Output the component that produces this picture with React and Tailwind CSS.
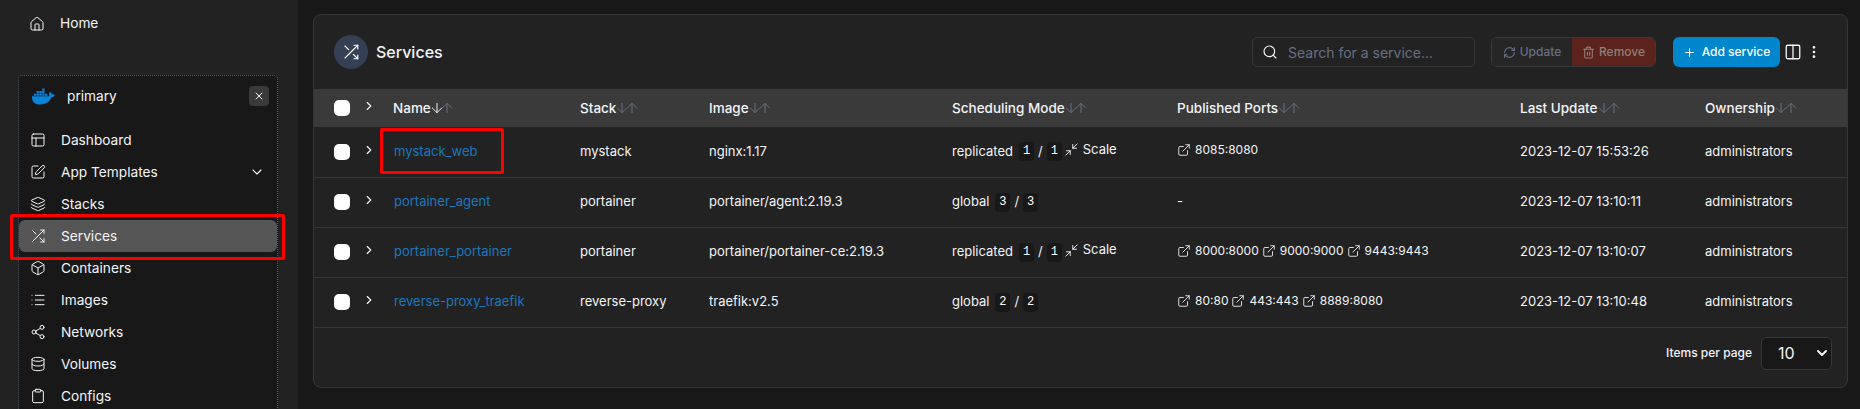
import React from "react";
import {
  House,
  Layout,
  SquarePen,
  Layers,
  Box,
  List,
  Share2,
  Database,
  Clipboard,
  ChevronDown,
  ChevronRight,
  X,
  Search,
  RefreshCw,
  Trash2,
  Plus,
  Columns2,
  EllipsisVertical,
  ExternalLink,
  Minimize2,
  ArrowDown,
  ArrowUp,
} from "lucide-react";
import { FaDocker } from "react-icons/fa";
import { FiShuffle } from "react-icons/fi";

const menu = [
  { label: "Dashboard", icon: Layout },
  { label: "App Templates", icon: SquarePen, more: true },
  { label: "Stacks", icon: Layers },
  { label: "Services", icon: FiShuffle, active: true },
  { label: "Containers", icon: Box },
  { label: "Images", icon: List },
  { label: "Networks", icon: Share2 },
  { label: "Volumes", icon: Database },
  { label: "Configs", icon: Clipboard },
];

const columns = [
  { label: "Name", w: "w-[187px]", sorted: true },
  { label: "Stack", w: "w-[129px]" },
  { label: "Image", w: "w-[243px]" },
  { label: "Scheduling Mode", w: "w-[225px]" },
  { label: "Published Ports", w: "w-[343px]" },
  { label: "Last Update", w: "w-[185px]" },
  { label: "Ownership", w: "" },
];

const services = [
  {
    name: "mystack_web",
    stack: "mystack",
    image: "nginx:1.17",
    mode: "replicated",
    count: 1,
    scale: true,
    ports: ["8085:8080"],
    updated: "2023-12-07 15:53:26",
    marked: true,
  },
  {
    name: "portainer_agent",
    stack: "portainer",
    image: "portainer/agent:2.19.3",
    mode: "global",
    count: 3,
    ports: [],
    updated: "2023-12-07 13:10:11",
  },
  {
    name: "portainer_portainer",
    stack: "portainer",
    image: "portainer/portainer-ce:2.19.3",
    mode: "replicated",
    count: 1,
    scale: true,
    ports: ["8000:8000", "9000:9000", "9443:9443"],
    updated: "2023-12-07 13:10:07",
  },
  {
    name: "reverse-proxy_traefik",
    stack: "reverse-proxy",
    image: "traefik:v2.5",
    mode: "global",
    count: 2,
    ports: ["80:80", "443:443", "8889:8080"],
    updated: "2023-12-07 13:10:48",
  },
];

function Checkbox() {
  return <span className="block h-4 w-4 rounded-[5px] bg-white" />;
}

function Count({ value }) {
  return (
    <code className="mx-[1px] inline-block h-[19px] w-[15px] rounded-[4px] bg-[#181818] text-center font-['Liberation_Mono',monospace] text-[12px] leading-[19px] text-white">
      {value}
    </code>
  );
}

function Sidebar() {
  return (
    <aside className="w-[298px] shrink-0 bg-[#222222] pl-[18px] pr-[20px] text-[13.7px]">
      <div className="flex h-[47px] items-center pl-[11px] text-[#f2f4f7]">
        <House size={16} strokeWidth={1.5} className="mr-[15px]" />
        <span>Home</span>
      </div>
      <div className="mt-[28px] rounded-[4px] border border-dotted border-[#505568] bg-[#181818]">
        <div className="flex h-[40px] items-center pl-[13px] pr-[8px] text-[#f2f4f7]">
          <FaDocker size={23} className="text-[#0a84d6]" />
          <span className="ml-[12px]">primary</span>
          <span className="ml-auto flex h-5 w-5 items-center justify-center rounded-[4px] bg-[#3a3a3a]">
            <X size={12} strokeWidth={2} />
          </span>
        </div>
        <nav className="flex flex-col pt-[8px]">
          {menu.map(({ label, icon: Icon, more, active }) => (
            <div
              key={label}
              className={
                active
                  ? "relative flex h-8 items-center rounded-[6px] bg-[#555555] pl-[11px] pr-[12px] text-[#f2f4f7]"
                  : "relative flex h-8 items-center pl-[11px] pr-[12px] text-[#f2f4f7]"
              }
            >
              <Icon size={16} strokeWidth={1.5} className="mr-[15px]" />
              <span>{label}</span>
              {more && <ChevronDown size={16} strokeWidth={1.75} className="ml-auto" />}
              {active && (
                <span className="absolute -bottom-[8px] -left-[9px] -right-[8px] -top-[6px] rounded-[2px] border-[3px] border-[#ff0000]" />
              )}
            </div>
          ))}
        </nav>
      </div>
    </aside>
  );
}

function SortHeader({ label, sorted }) {
  return (
    <span className="flex items-center">
      {label}
      <ArrowDown
        size={16}
        strokeWidth={1.5}
        className={sorted ? "-ml-[2px] -mr-[6px] text-[#f2f4f7]" : "-ml-[2px] -mr-[6px] text-[#667085]"}
      />
      <ArrowUp size={16} strokeWidth={1.5} className="text-[#667085]" />
    </span>
  );
}

function ServiceRow({ row }) {
  return (
    <tr className="h-[50px] border-b border-[#373737] text-[#f2f4f7]">
      <td className="pl-[20px]">
        <Checkbox />
      </td>
      <td className="pl-[2px]">
        <ChevronRight size={14} strokeWidth={2} className="-mt-1" />
      </td>
      <td className="pl-[1px] text-[#1a78c0]">
        <span className="relative">
          {row.name}
          {row.marked && (
            <span className="absolute -bottom-[15px] -left-[14px] -right-[27px] -top-[15px] rounded-[2px] border-[3px] border-[#ff0000]" />
          )}
        </span>
      </td>
      <td>{row.stack}</td>
      <td>{row.image}</td>
      <td>
        <div className="flex items-center">
          <span className="mr-[5px]">{row.mode}</span>
          <Count value={row.count} />
          <span className="mx-[3px]">/</span>
          <Count value={row.count} />
          {row.scale && (
            <span className="-mt-[4px] ml-[1px] flex items-center">
              <Minimize2 size={15} strokeWidth={1.5} className="mr-[4px]" />
              Scale
            </span>
          )}
        </div>
      </td>
      <td>
        {row.ports.length === 0 ? (
          "-"
        ) : (
          <div className="-mt-[3px] flex items-center gap-[3px] text-[12px]">
            {row.ports.map((port) => (
              <span key={port} className="flex items-center gap-[4px]">
                <ExternalLink size={14} strokeWidth={1.5} />
                {port}
              </span>
            ))}
          </div>
        )}
      </td>
      <td>{row.updated}</td>
      <td>administrators</td>
    </tr>
  );
}

export default function App() {
  return (
    <div className="flex h-[409px] w-[1860px] overflow-hidden bg-[#181818] font-['Inter',sans-serif] text-[13px]">
      <Sidebar />
      <main className="flex-1 pl-[15px] pr-[12px] pt-[14px]">
        <section className="h-[374px] overflow-hidden rounded-[8px] border border-[#373737] bg-[#222222]">
          <div className="flex h-[74px] items-center pl-[20px] pr-[25px]">
            <span className="flex h-[34px] w-[34px] items-center justify-center rounded-full bg-[#344054] text-white">
              <FiShuffle size={18} strokeWidth={1.5} />
            </span>
            <h1 className="ml-[8px] text-[16px] font-medium text-[#f2f4f7]">Services</h1>
            <div className="ml-auto flex h-[30px] w-[223px] items-center rounded-[5px] border border-[#373737] pl-[9px] text-[#667085]">
              <Search size={16} strokeWidth={1.75} className="text-[#f2f4f7]" />
              <span className="ml-[10px] text-[14px]">Search for a service...</span>
            </div>
            <div className="ml-[16px] flex h-[30px] overflow-hidden rounded-[6px] border border-[#3a3a3a] text-[12px] font-medium">
              <span className="flex w-[80px] items-center justify-center gap-[4px] bg-[#262626] text-[#667085]">
                <RefreshCw size={13} />
                Update
              </span>
              <span className="flex w-[83px] items-center justify-center gap-[4px] bg-[#5c231c] text-[#8f7f79]">
                <Trash2 size={13} />
                Remove
              </span>
            </div>
            <button className="ml-[17px] flex h-[30px] w-[107px] items-center justify-center gap-[6px] rounded-[6px] bg-[#0086cc] text-[12px] font-medium text-white">
              <Plus size={13} />
              Add service
            </button>
            <Columns2 size={18} strokeWidth={1.75} className="ml-[4px] text-[#f2f4f7]" />
            <EllipsisVertical size={16} strokeWidth={2} className="ml-[4px] text-[#f2f4f7]" />
          </div>
          <table className="w-full table-fixed text-left">
            <colgroup>
              <col className="w-[46px]" />
              <col className="w-[33px]" />
              {columns.map((c) => (
                <col key={c.label} className={c.w} />
              ))}
            </colgroup>
            <thead>
              <tr className="h-[38px] bg-[#3a3a3a] text-[#f2f4f7]">
                <th className="pl-[20px]">
                  <Checkbox />
                </th>
                <th className="pl-[2px]">
                  <ChevronRight size={14} strokeWidth={2} className="-mt-1" />
                </th>
                {columns.map((c) => (
                  <th key={c.label} className="text-[13.5px] font-medium">
                    <SortHeader label={c.label} sorted={c.sorted} />
                  </th>
                ))}
              </tr>
            </thead>
            <tbody>
              {services.map((row) => (
                <ServiceRow key={row.name} row={row} />
              ))}
            </tbody>
          </table>
          <div className="flex h-[59px] items-center justify-end pb-[8px] pr-[15px] text-[12px] font-medium text-[#f2f4f7]">
            <span>Items per page</span>
            <span className="ml-[9px] flex h-[33px] w-[71px] items-center rounded-[5px] border border-[#373737] bg-[#181818] pl-[16px] pr-[1px] text-[16px] font-normal">
              10
              <ChevronDown size={16} strokeWidth={3} className="ml-auto" />
            </span>
          </div>
        </section>
      </main>
    </div>
  );
}
